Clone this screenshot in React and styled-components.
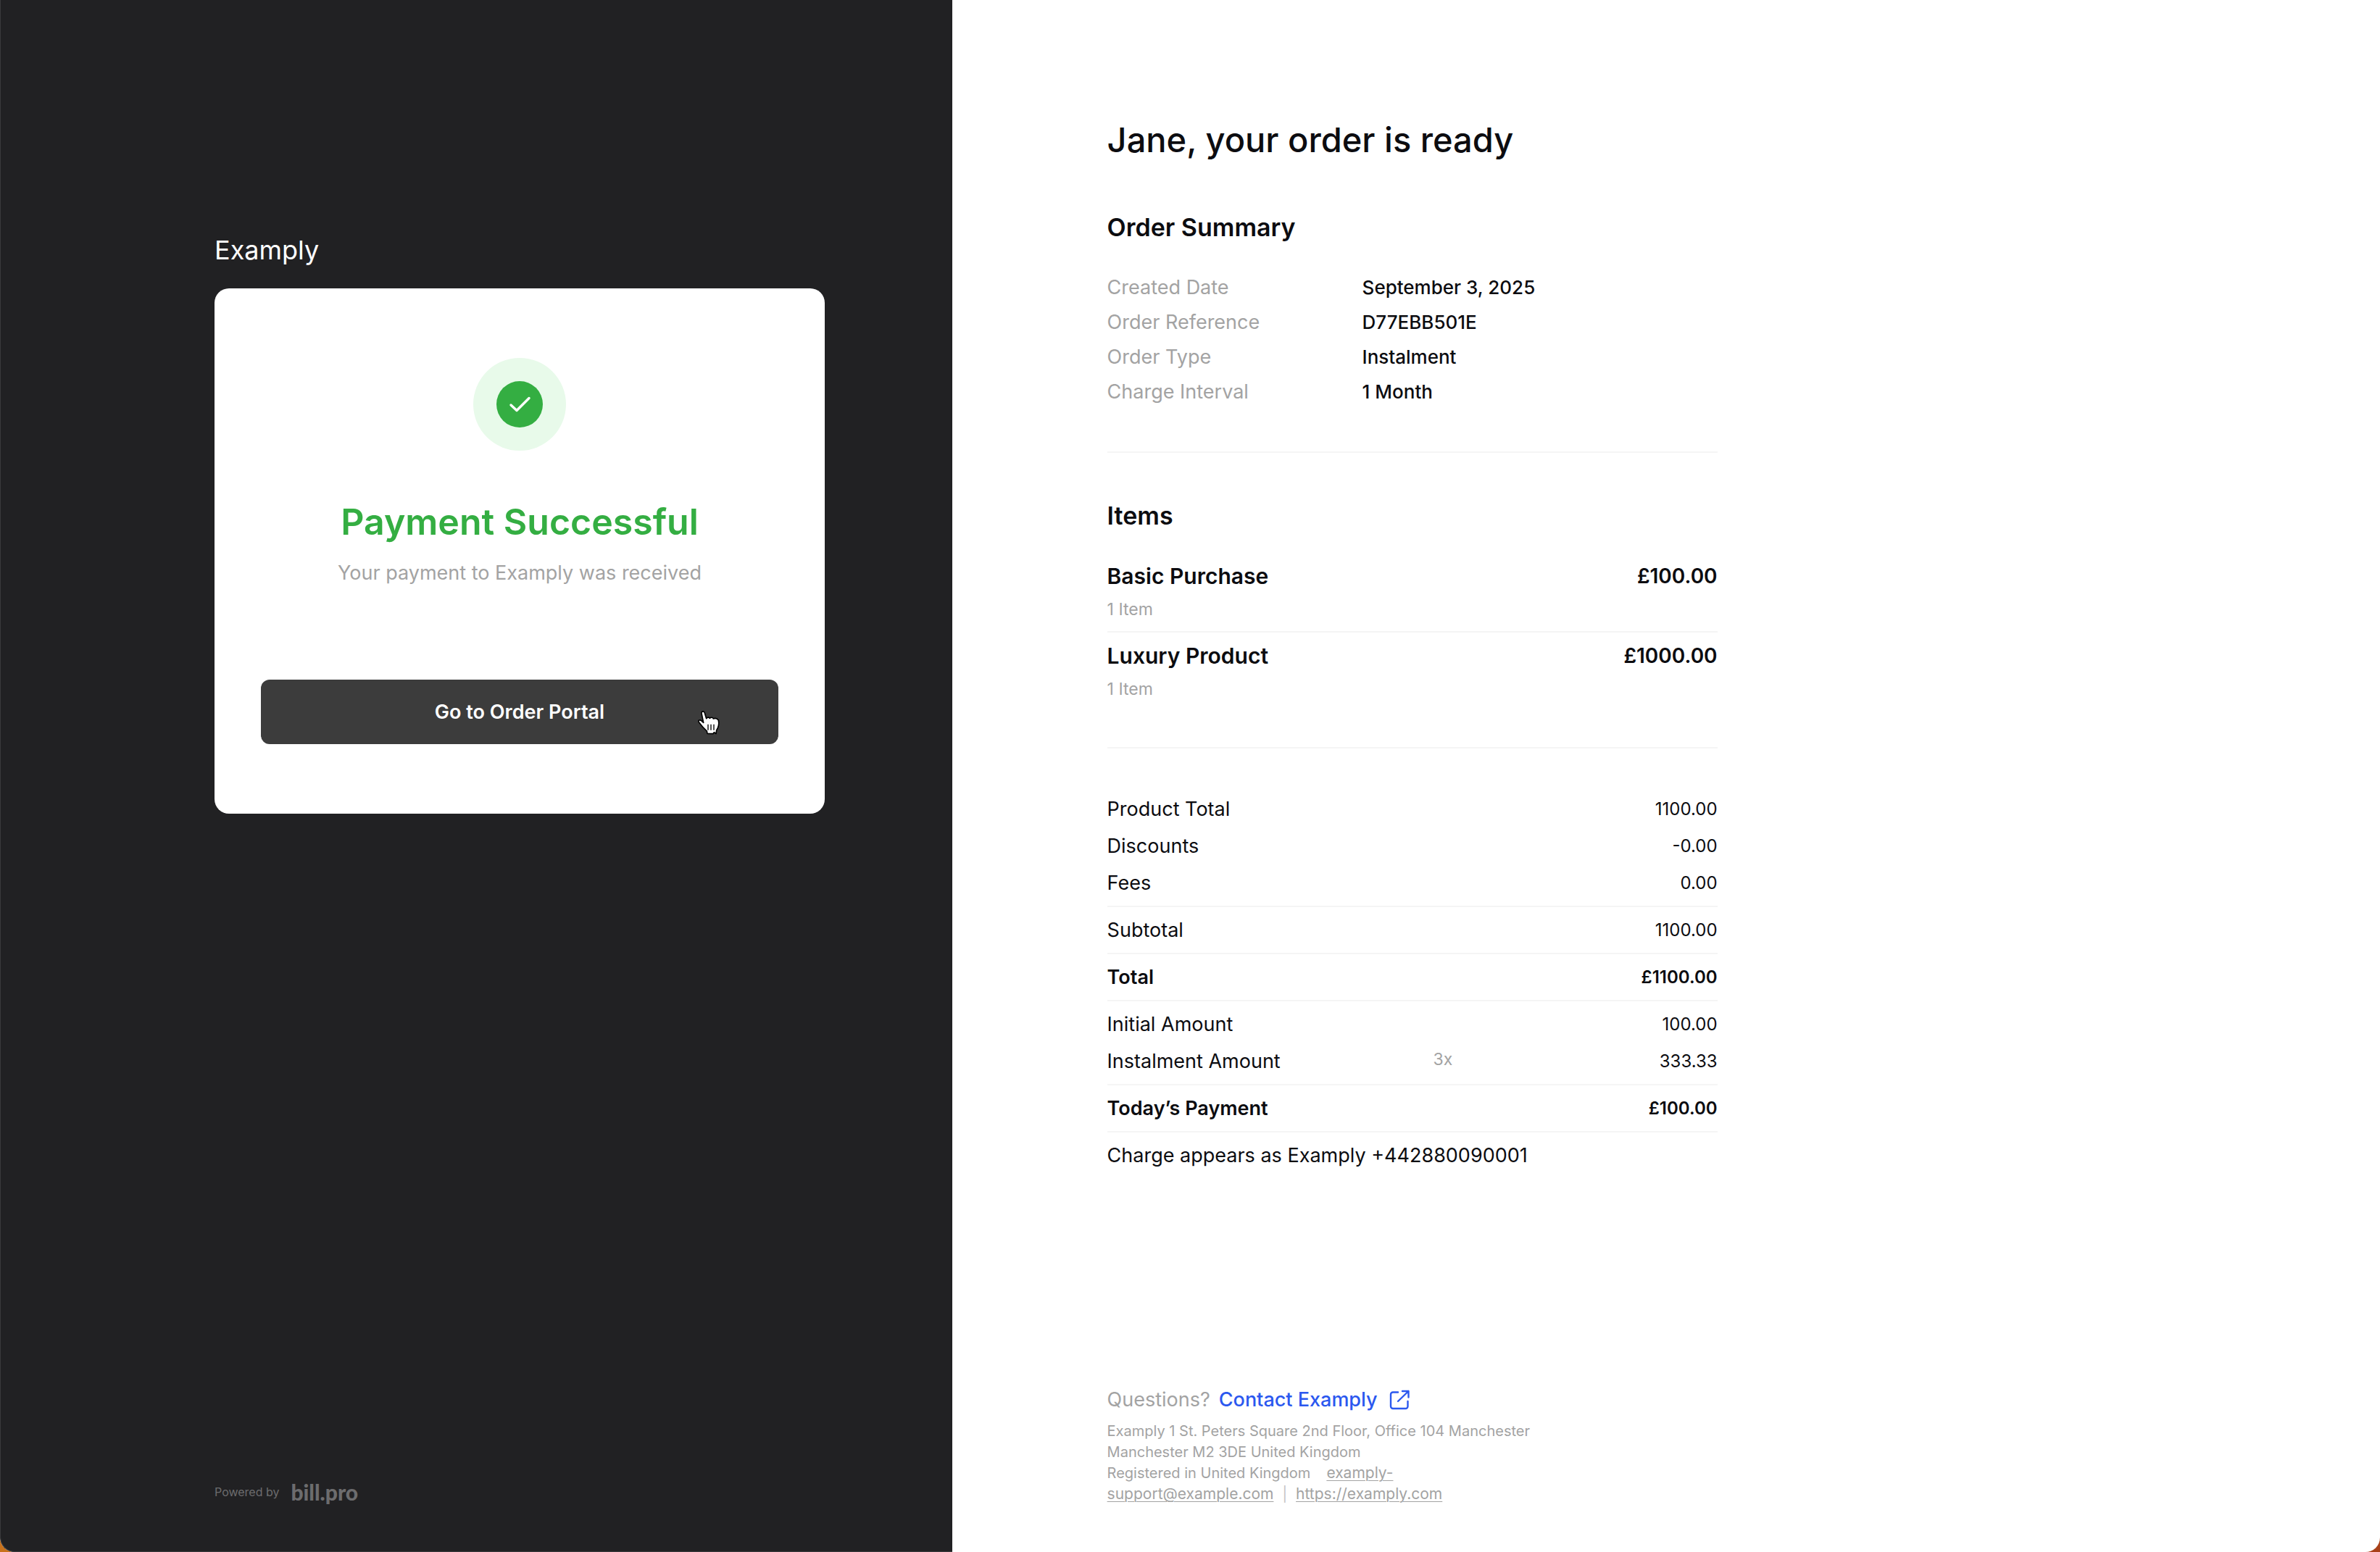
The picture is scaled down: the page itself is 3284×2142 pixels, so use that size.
import React from 'react';
import styled, { createGlobalStyle } from 'styled-components';

const color = {
  ink: '#0c0c10',
  muted: '#a3a3a3',
  line: '#f5f5f5',
  dark: '#212123',
  edge: '#3a3a3c',
  button: '#3c3c3c',
  green: '#34ae42',
  mint: '#e8faea',
  link: '#2b58ef',
  brandGrey: '#6c6c6e',
};

const GlobalStyle = createGlobalStyle`
  *, *::before, *::after { box-sizing: border-box; }
  body {
    margin: 0;
    background: linear-gradient(to right, #c8721c, #a9411a);
    color: ${color.ink};
    font-family: Inter, "Open Sans", sans-serif;
  }
  h1, h2, p, ul, dl, dt, dd, address { margin: 0; padding: 0; font-style: normal; }
  ul { list-style: none; }
  a { color: inherit; }
`;

const Shell = styled.div`
  display: flex;
  min-height: 100vh;
  background: #fff;
  border-radius: 0 0 20px 20px;
  overflow: hidden;
`;

const StatusPanel = styled.section`
  flex: 0 0 40%;
  display: flex;
  flex-direction: column;
  padding: 318px 64px 65px 296px;
  background: ${color.dark};
  border-radius: 0 0 0 20px;
  box-shadow: inset 1px -1px 0 ${color.edge};
`;

const MerchantName = styled.p`
  margin-bottom: 26px;
  color: #fff;
  font-size: 36px;
  line-height: 54px;
`;

const StatusCard = styled.div`
  display: flex;
  flex-direction: column;
  align-items: center;
  width: 100%;
  max-width: 842px;
  padding: 96px 64px;
  background: #fff;
  border-radius: 20px;
  text-align: center;
`;

const StatusHalo = styled.div`
  display: grid;
  place-items: center;
  width: 128px;
  height: 128px;
  margin-bottom: 60px;
  border-radius: 50%;
  background: ${color.mint};
`;

const StatusTitle = styled.h1`
  margin-bottom: 14px;
  color: ${color.green};
  font-size: 50px;
  font-weight: 600;
  line-height: 76px;
`;

const StatusText = styled.p`
  color: ${color.muted};
  font-size: 27px;
  line-height: 38px;
`;

const PortalButton = styled.button`
  position: relative;
  width: 100%;
  height: 89px;
  margin-top: 128px;
  border: 0;
  border-radius: 12px;
  background: ${color.button};
  color: #fff;
  font: 600 27px/40px Inter, "Open Sans", sans-serif;
  cursor: pointer;
`;

const HandPointer = styled.svg`
  position: absolute;
  top: 41px;
  right: 79px;
  width: 34px;
  height: 38px;
`;

const PoweredBy = styled.footer`
  display: flex;
  align-items: center;
  gap: 16px;
  margin-top: auto;
  color: ${color.brandGrey};
  font-size: 16px;
  line-height: 36px;
`;

const BillProLogo = styled.a`
  font-family: Lato, sans-serif;
  font-size: 30px;
  font-weight: 900;
  text-decoration: none;
`;

const OrderPanel = styled.main`
  flex: 1;
  display: flex;
  flex-direction: column;
  padding: 159px 64px 65px 214px;
`;

const OrderBody = styled.div`
  width: 100%;
  max-width: 842px;
`;

const PageTitle = styled.h1`
  margin-bottom: 62px;
  font-size: 47px;
  font-weight: 500;
  line-height: 68px;
`;

const SectionTitle = styled.h2`
  margin-bottom: 34px;
  font-size: 34px;
  font-weight: 600;
  line-height: 50px;
`;

const Section = styled.section`
  & + & {
    margin-top: 58px;
    padding-top: 62px;
    border-top: 2px solid ${color.line};
  }
`;

const Facts = styled.dl`
  display: grid;
  grid-template-columns: 352px 1fr;
  line-height: 48px;
`;

const FactLabel = styled.dt`
  color: ${color.muted};
  font-size: 27px;
`;

const FactValue = styled.dd`
  font-size: 26px;
  font-weight: 500;
`;

const Item = styled.li`
  & + & {
    margin-top: 8px;
    padding-top: 8px;
    border-top: 2px solid ${color.line};
  }
`;

const ItemHead = styled.div`
  display: flex;
  justify-content: space-between;
  align-items: center;
  font-size: 30px;
  font-weight: 600;
  line-height: 48px;
`;

const ItemPrice = styled.span`
  font-size: 28px;
`;

const ItemQuantity = styled.p`
  color: ${color.muted};
  font-size: 23px;
  line-height: 44px;
`;

const TotalsGroup = styled.dl`
  display: flex;
  flex-direction: column;
  gap: 8px;
  padding-bottom: 10px;
  border-bottom: 2px solid ${color.line};
  font-weight: ${(p) => (p.$strong ? 600 : 400)};

  & + & { padding-top: 10px; }
`;

const TotalsRow = styled.div`
  display: grid;
  grid-template-columns: 450px auto 1fr;
  align-items: center;
  line-height: 43px;
`;

const TotalsLabel = styled.dt`
  font-size: 27px;
`;

const TotalsNote = styled.dd`
  align-self: start;
  color: ${color.muted};
  font-size: 23px;
  line-height: 38px;
`;

const TotalsValue = styled.dd`
  grid-column: 3;
  font-size: 24px;
  text-align: right;
`;

const ChargeNote = styled.p`
  padding-top: 10px;
  font-size: 27px;
  line-height: 43px;
`;

const OrderFooter = styled.footer`
  margin-top: auto;
  color: ${color.muted};
`;

const Questions = styled.p`
  display: flex;
  align-items: center;
  gap: 12px;
  margin-bottom: 8px;
  font-size: 27px;
  line-height: 42px;
`;

const ContactLink = styled.a`
  display: inline-flex;
  align-items: center;
  gap: 14px;
  color: ${color.link};
  font-weight: 500;
  text-decoration: none;
`;

const Address = styled.address`
  max-width: 600px;
  font-size: 20px;
  line-height: 29px;
`;

const AddressLine = styled.p``;

const AddressLink = styled.a`
  font-size: 21px;
  line-height: 28px;
  text-decoration-thickness: 1px;
  text-underline-offset: 3px;
`;

const EmailLink = styled(AddressLink)`
  margin-left: 22px;
`;

const Separator = styled.span`
  margin: 0 12px;
  color: #c4c4c4;
`;

const facts = [
  ['Created Date', 'September 3, 2025'],
  ['Order Reference', 'D77EBB501E'],
  ['Order Type', 'Instalment'],
  ['Charge Interval', '1 Month'],
];

const items = [
  { name: 'Basic Purchase', price: '£100.00', quantity: '1 Item' },
  { name: 'Luxury Product', price: '£1000.00', quantity: '1 Item' },
];

const totals = [
  {
    rows: [
      { label: 'Product Total', value: '1100.00' },
      { label: 'Discounts', value: '-0.00' },
      { label: 'Fees', value: '0.00' },
    ],
  },
  { rows: [{ label: 'Subtotal', value: '1100.00' }] },
  { strong: true, rows: [{ label: 'Total', value: '£1100.00' }] },
  {
    rows: [
      { label: 'Initial Amount', value: '100.00' },
      { label: 'Instalment Amount', note: '3x', value: '333.33' },
    ],
  },
  { strong: true, rows: [{ label: 'Today’s Payment', value: '£100.00' }] },
];

function CheckBadge() {
  return (
    <svg width="64" height="64" viewBox="0 0 64 64" fill="none" aria-hidden="true">
      <circle cx="32" cy="32" r="32" fill={color.green} />
      <path d="M20 33l8 7.5 17-17" stroke="#fff" strokeWidth="3.4" strokeLinecap="round" strokeLinejoin="round" />
    </svg>
  );
}

function Hand() {
  return (
    <HandPointer viewBox="36 26 102 114" aria-hidden="true">
      <path
        d="M57 42C56 33 68 32 70 41L77 64C81 58 89 58 91 63C96 58 104 59 106 65C113 62 122 64 127 71C130 84 126 102 119 113L117 127L109 121L105 127L81 126L79 116C66 104 54 90 46 79C42 71 50 68 56 73L65 81Z"
        fill="#fff"
        stroke="#000"
        strokeWidth="5"
        strokeLinejoin="round"
      />
      <path d="M84 88V112M96 88V112M108 88V112" stroke="#000" strokeWidth="4" />
    </HandPointer>
  );
}

function ExternalIcon() {
  return (
    <svg width="32" height="32" viewBox="0 0 32 32" fill="none" stroke="currentColor" strokeWidth="2.4" strokeLinecap="round" strokeLinejoin="round" aria-hidden="true">
      <path d="M14 5.5H7a3 3 0 0 0-3 3V25a3 3 0 0 0 3 3h17.5a3 3 0 0 0 3-3v-7" />
      <path d="M20 4h8.5v8.5M28.5 4L14 18" />
    </svg>
  );
}

export default function App() {
  return (
    <>
      <GlobalStyle />
      <Shell>
        <StatusPanel>
          <MerchantName>Examply</MerchantName>
          <StatusCard>
            <StatusHalo><CheckBadge /></StatusHalo>
            <StatusTitle>Payment Successful</StatusTitle>
            <StatusText>Your payment to Examply was received</StatusText>
            <PortalButton type="button">
              Go to Order Portal
              <Hand />
            </PortalButton>
          </StatusCard>
          <PoweredBy>
            <span>Powered by</span>
            <BillProLogo href="#bill-pro">bill.pro</BillProLogo>
          </PoweredBy>
        </StatusPanel>

        <OrderPanel>
          <OrderBody>
            <PageTitle>Jane, your order is ready</PageTitle>
            <Section>
              <SectionTitle>Order Summary</SectionTitle>
              <Facts>
                {facts.map(([label, value]) => (
                  <React.Fragment key={label}>
                    <FactLabel>{label}</FactLabel>
                    <FactValue>{value}</FactValue>
                  </React.Fragment>
                ))}
              </Facts>
            </Section>
            <Section>
              <SectionTitle>Items</SectionTitle>
              <ul>
                {items.map((item) => (
                  <Item key={item.name}>
                    <ItemHead>
                      <span>{item.name}</span>
                      <ItemPrice>{item.price}</ItemPrice>
                    </ItemHead>
                    <ItemQuantity>{item.quantity}</ItemQuantity>
                  </Item>
                ))}
              </ul>
            </Section>
            <Section>
              {totals.map((group) => (
                <TotalsGroup key={group.rows[0].label} $strong={group.strong}>
                  {group.rows.map((row) => (
                    <TotalsRow key={row.label}>
                      <TotalsLabel>{row.label}</TotalsLabel>
                      {row.note && <TotalsNote>{row.note}</TotalsNote>}
                      <TotalsValue>{row.value}</TotalsValue>
                    </TotalsRow>
                  ))}
                </TotalsGroup>
              ))}
              <ChargeNote>Charge appears as Examply +442880090001</ChargeNote>
            </Section>
          </OrderBody>

          <OrderFooter>
            <Questions>
              Questions?
              <ContactLink href="#contact">
                Contact Examply
                <ExternalIcon />
              </ContactLink>
            </Questions>
            <Address>
              <AddressLine>Examply 1 St. Peters Square 2nd Floor, Office 104 Manchester</AddressLine>
              <AddressLine>Manchester M2 3DE United Kingdom</AddressLine>
              <AddressLine>
                <span>Registered in United Kingdom</span>
                <EmailLink href="mailto:examply-support@example.com">
                  <span>examply-</span>
                  <wbr />
                  <span>support@example.com</span>
                </EmailLink>
                <Separator>|</Separator>
                <AddressLink href="https://examply.com">https://examply.com</AddressLink>
              </AddressLine>
            </Address>
          </OrderFooter>
        </OrderPanel>
      </Shell>
    </>
  );
}
